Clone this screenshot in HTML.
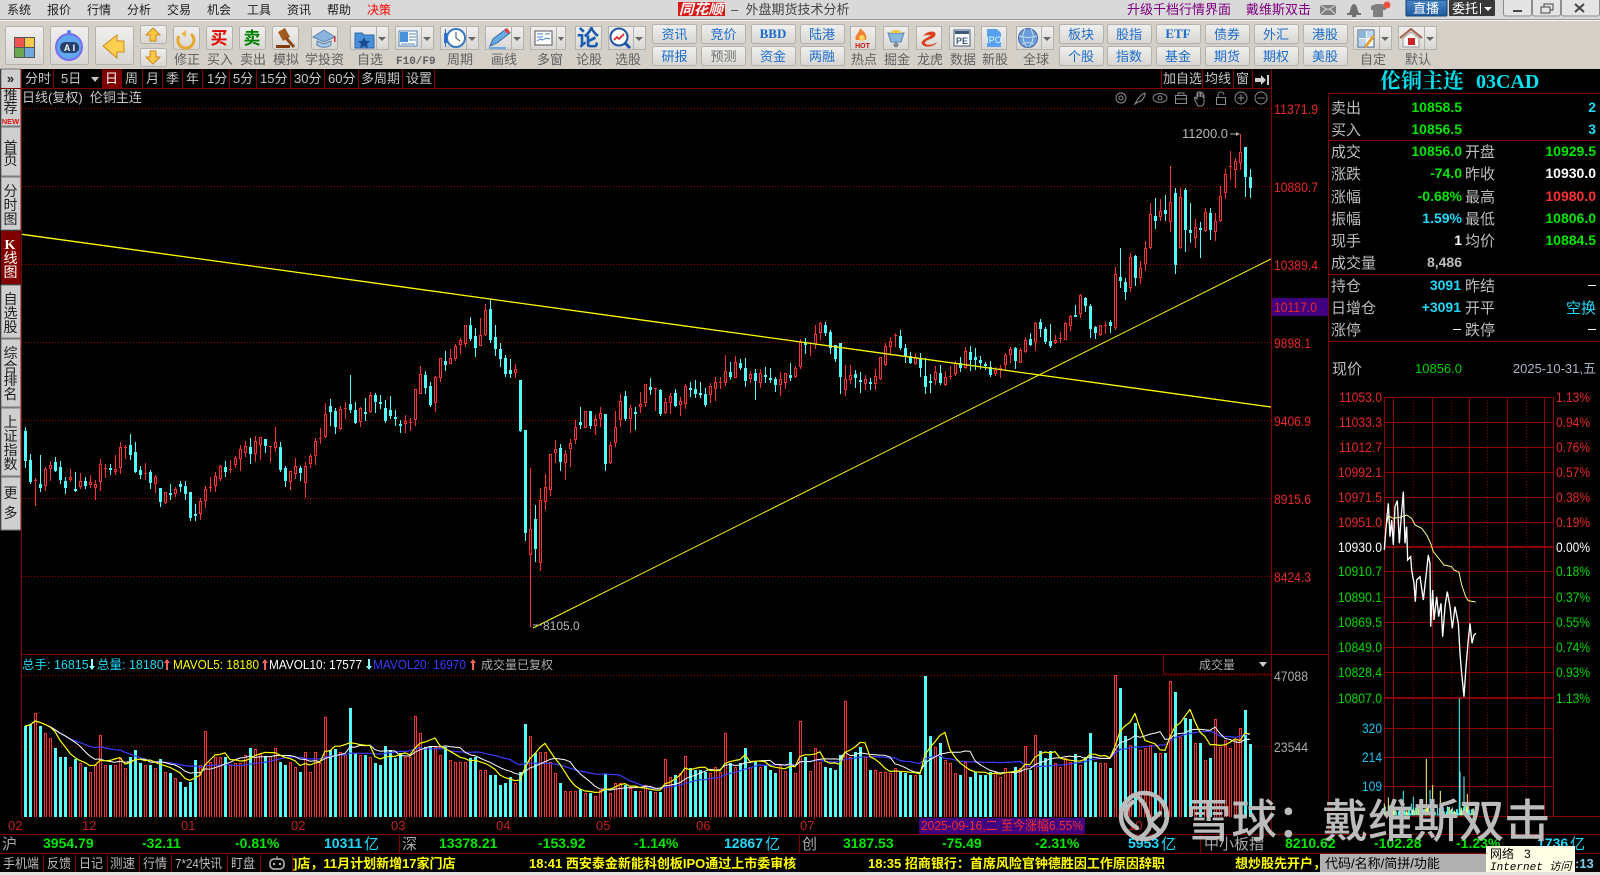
<!DOCTYPE html>
<html lang="zh"><head><meta charset="utf-8"><title>同花顺</title>
<style>
html,body{margin:0;padding:0;background:#000;width:1600px;height:875px;overflow:hidden}
svg{display:block}
text{font-family:"Liberation Sans","WenQuanYi Zen Hei","Noto Sans CJK SC",sans-serif;font-size:12px;white-space:pre}
.r{text-anchor:end}.m{text-anchor:middle}
.b{font-weight:bold}
.n{font-size:14px;font-weight:bold}
.gn{fill:#00e600}.cy{fill:#20d8f8}.wh{fill:#fff}.gy{fill:#bdbdbd}
.lb{font-size:15px;fill:#bdbdbd}
.ax{font-size:14px;fill:#e82828}
.gi{font-size:14px;fill:#00d800}
.xa{font-size:13px;fill:#c02020}
.ig{font-size:14px;fill:#00e600;font-weight:bold}
.tl{fill:#606060;font-size:13px}
.bl{fill:#1c6ccc;font-size:13px}
.tab{fill:#c8c8c8;font-size:13px}
.bot{fill:#bdbdbd;font-size:13px}
.tk{fill:#ff0;font-size:13px;font-weight:bold}
.sd{fill:#222;font-size:14px;text-anchor:middle}
.l{fill:#1c1c1c;font-size:12px}
</style></head><body>
<svg xmlns="http://www.w3.org/2000/svg" width="1600" height="875" viewBox="0 0 1600 875">
<defs>
<linearGradient id="tg" x1="0" y1="0" x2="0" y2="1"><stop offset="0" stop-color="#f0f0ee"/><stop offset="1" stop-color="#d8d6d2"/></linearGradient>
<linearGradient id="bg" x1="0" y1="0" x2="0" y2="1"><stop offset="0" stop-color="#4a86c8"/><stop offset="1" stop-color="#1d5a9e"/></linearGradient>
</defs>
<rect width="1600" height="875" fill="#000"/>
<!-- menu -->
<rect width="1600" height="19" fill="#d9d9d9"/>
<rect y="19" width="1600" height="1" fill="#9a9a9a"/><rect y="20" width="1600" height="1" fill="#f4f4f4"/>
<rect y="21" width="1600" height="48" fill="#d4d0c8"/>
<g class="men">
<text x="7" y="14" class="l">系统</text><text x="47" y="14" class="l">报价</text><text x="87" y="14" class="l">行情</text><text x="127" y="14" class="l">分析</text><text x="167" y="14" class="l">交易</text><text x="207" y="14" class="l">机会</text><text x="247" y="14" class="l">工具</text><text x="287" y="14" class="l">资讯</text><text x="327" y="14" class="l">帮助</text><text x="367" y="14" class="l" style="fill:#f00">决策</text>
</g>
<rect x="678" y="2" width="47" height="14" fill="#d81818"/><text x="701" y="14" class="m b wh" style="font-size:14px;font-style:italic" textLength="44" lengthAdjust="spacingAndGlyphs">同花顺</text>
<text x="731" y="14" style="font-size:13px;fill:#444">–  外盘期货技术分析</text>
<text x="1127" y="14" style="font-size:13px;fill:#800080">升级千档行情界面</text>
<text x="1246" y="14" style="font-size:13px;fill:#800080">戴维斯双击</text>
<!-- title icons -->
<rect x="1320" y="5" width="16" height="10" fill="#808080"/><path d="M1320 5l8 5 8-5M1320 15l6-6M1336 15l-6-6" stroke="#d9d9d9" fill="none"/>
<path d="M1349 13c2-2 1-8 5-9 4 1 3 7 5 9zM1347 13h14v2h-14zM1352 15h4v2h-4z" fill="#707070"/>
<path d="M1371 6l5-2h6l4 2v4l-3 0v7h-10v-7h-2z" fill="#808080"/><circle cx="1387" cy="5" r="3.500" fill="#f05040"/>
<rect x="1406" y="0" width="41" height="16" rx="1" fill="url(#bg)" stroke="#15406e"/><text x="1426" y="13" class="m wh" style="font-size:13px">直播</text>
<rect x="1449" y="0" width="46" height="16" rx="1" fill="#383838"/><text x="1452" y="13" class="wh" style="font-size:13px">委托</text><rect x="1480" y="3" width="1" height="11" fill="#fff"/><path d="M1484 7h8l-4 4z" fill="#fff"/>
<g fill="#e4e4e4" stroke="#8c8c8c"><rect x="1503.500" y="-2" width="28" height="18" rx="2"/><rect x="1532.500" y="-2" width="28" height="18" rx="2"/><rect x="1561.500" y="-2" width="38" height="18" rx="2"/></g>
<rect x="1513" y="10" width="9" height="2" fill="#444"/><path d="M1541 7h9v6h-9zM1544 7v-3h9v6h-3" fill="none" stroke="#444"/><path d="M1575 4l9 8M1584 4l-9 8" stroke="#444" stroke-width="2"/>

<!-- toolbar tiles -->
<g fill="url(#tg)" stroke="#b4b2ae">
<rect x="5.500" y="26.500" width="38" height="38" rx="2"/><rect x="50.500" y="26.500" width="38" height="38" rx="2"/><rect x="95.500" y="26.500" width="38" height="38" rx="2"/>
<rect x="140.500" y="25.500" width="26" height="18" rx="2"/><rect x="140.500" y="48.500" width="26" height="18" rx="2"/>
<rect x="173.500" y="26.500" width="26" height="23" rx="2"/><rect x="206.500" y="26.500" width="26" height="23" rx="2"/><rect x="239.500" y="26.500" width="26" height="23" rx="2"/><rect x="272.500" y="26.500" width="26" height="23" rx="2"/><rect x="311.500" y="26.500" width="26" height="23" rx="2"/>
<rect x="350.500" y="26.500" width="26" height="23"/><rect x="376.500" y="26.500" width="12" height="23"/>
<rect x="395.500" y="26.500" width="26" height="23"/><rect x="421.500" y="26.500" width="12" height="23"/>
<rect x="440.500" y="26.500" width="26" height="23"/><rect x="466.500" y="26.500" width="12" height="23"/>
<rect x="485.500" y="26.500" width="26" height="23"/><rect x="511.500" y="26.500" width="12" height="23"/>
<rect x="530.500" y="26.500" width="26" height="23"/><rect x="556.500" y="26.500" width="9" height="23"/>
<rect x="575.500" y="26.500" width="26" height="23"/>
<rect x="608.500" y="26.500" width="25" height="23"/><rect x="633.500" y="26.500" width="12" height="23"/>
<rect x="850.500" y="26.500" width="25" height="23"/><rect x="883.500" y="26.500" width="25" height="23"/><rect x="916.500" y="26.500" width="25" height="23"/><rect x="949.500" y="26.500" width="25" height="23"/><rect x="981.500" y="26.500" width="25" height="23"/>
<rect x="1016.500" y="26.500" width="25" height="23"/><rect x="1041.500" y="26.500" width="12" height="23"/>
<rect x="1353.500" y="26.500" width="26" height="23"/><rect x="1379.500" y="26.500" width="12" height="23"/>
<rect x="1398.500" y="26.500" width="26" height="23"/><rect x="1424.500" y="26.500" width="12" height="23"/>
<rect x="652.500" y="24.500" width="44" height="19" rx="2"/><rect x="652.500" y="46.500" width="44" height="19" rx="2"/><rect x="701.500" y="24.500" width="44" height="19" rx="2"/><rect x="701.500" y="46.500" width="44" height="19" rx="2"/><rect x="751.500" y="24.500" width="44" height="19" rx="2"/><rect x="751.500" y="46.500" width="44" height="19" rx="2"/><rect x="800.500" y="24.500" width="44" height="19" rx="2"/><rect x="800.500" y="46.500" width="44" height="19" rx="2"/>
<rect x="1059.500" y="24.500" width="44" height="19" rx="2"/><rect x="1059.500" y="46.500" width="44" height="19" rx="2"/><rect x="1107.500" y="24.500" width="44" height="19" rx="2"/><rect x="1107.500" y="46.500" width="44" height="19" rx="2"/><rect x="1156.500" y="24.500" width="44" height="19" rx="2"/><rect x="1156.500" y="46.500" width="44" height="19" rx="2"/><rect x="1205.500" y="24.500" width="44" height="19" rx="2"/><rect x="1205.500" y="46.500" width="44" height="19" rx="2"/><rect x="1254.500" y="24.500" width="44" height="19" rx="2"/><rect x="1254.500" y="46.500" width="44" height="19" rx="2"/><rect x="1303.500" y="24.500" width="44" height="19" rx="2"/><rect x="1303.500" y="46.500" width="44" height="19" rx="2"/>
</g>
<!-- dropdown triangles -->
<g fill="#666"><path d="M378 37h8l-4 4zM423 37h8l-4 4zM468 37h8l-4 4zM513 37h8l-4 4zM558 37h6l-3 4zM635 37h8l-4 4zM1043 37h8l-4 4zM1381 37h8l-4 4zM1426 37h8l-4 4z"/></g>
<!-- icons -->
<rect x="14" y="37" width="21" height="21" fill="#555"/><rect x="15" y="38" width="9" height="9" fill="#ef5350"/><rect x="25" y="38" width="9" height="9" fill="#f4c84a"/><rect x="15" y="48" width="9" height="9" fill="#6aa84f"/><rect x="25" y="48" width="9" height="9" fill="#6fa8dc"/>
<circle cx="69" cy="47" r="13" fill="#5fa8ee" stroke="#7a6cf0" stroke-width="2"/><rect x="60" y="42" width="19" height="11" rx="5" fill="#27406e"/><text x="69.500" y="51" class="m b wh" style="font-size:9px">A I</text><circle cx="69" cy="32" r="2" fill="#5a7fe0"/>
<path d="M103 46l14-11v6h7v11h-7v6z" fill="#ffd050" stroke="#c88a20"/>
<path d="M153 28l7 7h-4v6h-6v-6h-4z" fill="#ffc840" stroke="#c88a20"/><path d="M153 64l7-7h-4v-6h-6v6h-4z" fill="#ffc840" stroke="#c88a20"/>
<path d="M179 36a8 8 0 1 0 12-2" fill="none" stroke="#e8a830" stroke-width="3"/><path d="M186 30v7l-5-3z" fill="#f0b840"/>
<text x="219" y="44" class="m b" style="font-size:17px;fill:#e00000">买</text><text x="252" y="44" class="m b" style="font-size:17px;fill:#008000">卖</text>
<path d="M278 32l7-4 5 9-7 4z" fill="#a05a20"/><path d="M286 38l8 9" stroke="#8a4a18" stroke-width="3"/><rect x="276" y="45" width="14" height="3" fill="#803a10"/>
<path d="M324 30l11 7-11 5-11-5z" fill="#8ab4dc" stroke="#5a84ac"/><path d="M317 41v4c4 3 10 3 14 0v-4l-7 3z" fill="#a8c8e8" stroke="#5a84ac"/><rect x="334" y="36" width="1.500" height="6" fill="#d03030"/>
<path d="M355 33h7l2 2h10v13h-19z" fill="#4a90d9" stroke="#2c6aa8"/><path d="M364 37l2 4h4l-3 3 1 4-4-2-4 2 1-4-3-3h4z" fill="#1c4a90"/>
<rect x="399" y="31" width="18" height="15" fill="#fff" stroke="#5a84ac"/><rect x="400" y="32" width="8" height="10" fill="#4a90d9"/><path d="M409 34h7M409 37h7M409 40h7M401 44h14" stroke="#5a84ac"/>
<circle cx="456" cy="38" r="9" fill="#fff" stroke="#3a78c0" stroke-width="2"/><path d="M456 32v6l4 3" stroke="#444" fill="none"/><rect x="444" y="33" width="3" height="10" fill="#3070d0"/><path d="M445.500 29v18" stroke="#3070d0"/>
<path d="M490 46l3-7 13-10 4 4-13 10z" fill="#6aa8e8" stroke="#3a6ca8"/><path d="M504 30l4 4 2-2-3-4z" fill="#e04040"/><path d="M489 48h17" stroke="#6aa8e8" stroke-width="2"/>
<rect x="535" y="31" width="17" height="14" fill="#fff" stroke="#555"/><path d="M537 34h6M537 37h6M545 34h5M537 41l3-2 3 1 3-2 4 1" stroke="#4a80c0" fill="none"/>
<text x="588" y="46" class="m b" style="font-size:22px;fill:#1a5cb0">论</text>
<circle cx="619" cy="37" r="8.500" fill="#fff" stroke="#1c54a8" stroke-width="2"/><path d="M614 40l3-3 2 2 5-5" stroke="#d82020" fill="none" stroke-width="1.600"/><path d="M625 43l5 5" stroke="#1c54a8" stroke-width="3"/>
<path d="M856 40c-2-5 3-6 4-12 3 3 8 6 6 12z" fill="#f08030"/><circle cx="862" cy="38" r="3" fill="#ffd060"/><text x="862.500" y="48" class="m b" style="font-size:7px;fill:#c81010">HOT</text>
<path d="M888 33h16l-3 9h-10z" fill="#88b8e0" stroke="#5a84ac"/><path d="M890 33c3-4 8-5 12 0z" fill="#f0c848"/><circle cx="896" cy="45" r="2.500" fill="#888"/>
<path d="M923 36c6-7 15-5 12 0-3 4-9 3-10 7 1 3 9 2 12-1-1 4-12 7-15 2-2-4 6-6 9-9-2 0-5 0-8 1z" fill="#d84020"/>
<rect x="954" y="30" width="16" height="16" fill="#fff" stroke="#405878"/><rect x="955" y="31" width="14" height="3" fill="#405878"/><text x="962" y="44" class="m b" style="font-size:9px;fill:#405878">PE</text>
<path d="M987 29h10l4 4v14h-14z" fill="#5aa0f0"/><text x="994" y="43" class="m" style="font-size:9px;fill:#dff">IPO</text>
<circle cx="1028" cy="38" r="9.500" fill="#6a9cd8" stroke="#48689c"/><path d="M1019 36c6 2 12 2 18 0M1022 44c4-2 8-2 12 0M1025 29c-3 6-3 12 2 18M1031 29c3 6 3 12-2 18" stroke="#c0d8f0" fill="none"/>
<rect x="1358" y="30" width="16" height="17" fill="#fff" stroke="#3a5c88"/><rect x="1359" y="31" width="7" height="7" fill="#8ab4dc"/><rect x="1367" y="31" width="6" height="7" fill="#bcd4ec"/><rect x="1359" y="39" width="7" height="7" fill="#bcd4ec"/><path d="M1364 46l9-11 2 2-9 11z" fill="#e0a030"/>
<path d="M1400 38l11-9 11 9" fill="none" stroke="#a06048" stroke-width="2"/><path d="M1403 38l8-6 8 6v9h-16z" fill="#f4f4f4" stroke="#999"/><rect x="1408" y="38" width="7" height="7" fill="#c82828"/>
<!-- tool labels -->
<text x="174" y="64" class="tl">修正</text><text x="207" y="64" class="tl">买入</text><text x="240" y="64" class="tl">卖出</text><text x="273" y="64" class="tl">模拟</text><text x="305" y="64" class="tl">学投资</text><text x="357" y="64" class="tl">自选</text>
<text x="396" y="64" class="tl" style="font-family:'Liberation Mono',monospace;font-size:11px;font-weight:bold">F10/F9</text><text x="447" y="64" class="tl">周期</text><text x="491" y="64" class="tl">画线</text><text x="537" y="64" class="tl">多窗</text><text x="576" y="64" class="tl">论股</text><text x="615" y="64" class="tl">选股</text><text x="851" y="64" class="tl">热点</text><text x="884" y="64" class="tl">掘金</text><text x="917" y="64" class="tl">龙虎</text><text x="950" y="64" class="tl">数据</text><text x="982" y="64" class="tl">新股</text><text x="1023" y="64" class="tl">全球</text><text x="1360" y="64" class="tl">自定</text><text x="1405" y="64" class="tl">默认</text>
<!-- grid buttons -->
<g class="gb">
<text x="674.500" y="39" class="bl m">资讯</text><text x="674.500" y="61" class="bl m">研报</text><text x="723.500" y="39" class="bl m">竞价</text><text x="723.500" y="61" class="m" style="fill:#707070;font-size:13px">预测</text>
<text x="773" y="38" class="bl m b" style="font-family:'Liberation Serif',serif">BBD</text><text x="773" y="61" class="bl m">资金</text><text x="822" y="39" class="bl m">陆港</text><text x="822" y="61" class="bl m">两融</text>
<text x="1081" y="39" class="bl m">板块</text><text x="1081" y="61" class="bl m">个股</text><text x="1129" y="39" class="bl m">股指</text><text x="1129" y="61" class="bl m">指数</text>
<text x="1178" y="38" class="bl m b" style="font-family:'Liberation Serif',serif">ETF</text><text x="1178" y="61" class="bl m">基金</text><text x="1227" y="39" class="bl m">债券</text><text x="1227" y="61" class="bl m">期货</text><text x="1276" y="39" class="bl m">外汇</text><text x="1276" y="61" class="bl m">期权</text><text x="1325" y="39" class="bl m">港股</text><text x="1325" y="61" class="bl m">美股</text>
</g>

<!-- sidebar -->
<g fill="#cfcfcf" stroke="#7a7a7a">
<rect x="1" y="69" width="19.500" height="57"/><rect x="1" y="127" width="19.500" height="49"/><rect x="1" y="177" width="19.500" height="53"/><rect x="1" y="285" width="19.500" height="53"/><rect x="1" y="339" width="19.500" height="68"/><rect x="1" y="408" width="19.500" height="68"/><rect x="1" y="477" width="19.500" height="53"/>
</g>
<rect x="1" y="231" width="19.500" height="53" fill="#800000"/>
<text x="10.500" y="83" class="sd b" style="font-size:13px">»</text>
<text x="10.500" y="100" class="sd">推</text><text x="10.500" y="113" class="sd">荐</text><text x="10.500" y="124" class="m b" style="fill:#e01010;font-size:7.500px">NEW</text>
<text x="10.500" y="152" class="sd">首</text><text x="10.500" y="165" class="sd">页</text>
<text x="10.500" y="196" class="sd">分</text><text x="10.500" y="210" class="sd">时</text><text x="10.500" y="224" class="sd">图</text>
<text x="10" y="249" class="sd b wh" style="fill:#fff;font-family:'Liberation Serif',serif">K</text><text x="10.500" y="263" class="sd" style="fill:#fff">线</text><text x="10.500" y="277" class="sd" style="fill:#fff">图</text>
<text x="10.500" y="304" class="sd">自</text><text x="10.500" y="318" class="sd">选</text><text x="10.500" y="332" class="sd">股</text>
<text x="10.500" y="358" class="sd">综</text><text x="10.500" y="372" class="sd">合</text><text x="10.500" y="385" class="sd">排</text><text x="10.500" y="399" class="sd">名</text>
<text x="10.500" y="427" class="sd">上</text><text x="10.500" y="441" class="sd">证</text><text x="10.500" y="455" class="sd">指</text><text x="10.500" y="469" class="sd">数</text>
<text x="10.500" y="498" class="sd">更</text><text x="10.500" y="518" class="sd">多</text>

<!-- chart frame + grid -->
<g shape-rendering="crispEdges">
<g stroke="#800000" fill="none">
<path d="M21.500 69V817M1271.500 69V834M1328.500 93V834M0 88.500H1272M21 654.500H1328M0 834.500H1600M0 853.500H1600M1328 93.500H1600M1328 140.500H1600M1328 274.500H1600M1328 341.500H1600"/>
<path d="M53.500 69V88M102.500 69V88M121.500 69V88M142.500 69V88M162.500 69V88M182.500 69V88M202.500 69V88M229.500 69V88M256.500 69V88M290.500 69V88M324.500 69V88M358.500 69V88M402.500 69V88M434.500 69V88M1161.500 69V88M1202.500 69V88M1233.500 69V88M1252.500 69V88"/>
<path d="M1163.500 654V674H1271M399.500 835V853M799.500 835V853M1200.500 835V853"/>
<path d="M43.500 854V872M75.500 854V872M107.500 854V872M139.500 854V872M171.500 854V872M227.500 854V872M260.500 854V872M292.500 854V872"/>
<path d="M22.500 817V820M84.500 817V820M195.500 817V820M305.500 817V820M405.500 817V820M510.500 817V820M610.500 817V820M710.500 817V820M814.500 817V820"/>
</g>
<path d="M22 108.500H1271M22 186.500H1271M22 264.500H1271M22 342.500H1271M22 420.500H1271M22 498.500H1271M22 576.500H1271M22 675.500H1271M22 746.500H1271" stroke="#a00000" stroke-dasharray="1 2" fill="none"/>
<rect x="102" y="69.500" width="19" height="18.500" fill="#800000"/>
<rect x="1272" y="298" width="56" height="18" fill="#400080"/>
<!-- intraday grid -->
<g stroke="#8c0000" fill="none">
<path d="M1384 397.500H1553M1384 422.500H1553M1384 447.500H1553M1384 472.500H1553M1384 497.500H1553M1384 522.500H1553M1384 571.500H1553M1384 597.500H1553M1384 622.500H1553M1384 647.500H1553M1384 672.500H1553M1384 728.500H1553M1384 757.500H1553M1384 786.500H1553M1384 816.500H1600"/>
<path d="M1384.500 397V817M1393.500 397V817M1432.500 397V817M1469.500 397V817M1507.500 397V817M1544.500 397V817M1553.500 397V817"/>
<path d="M1413.500 397V817M1451.500 397V817M1487.500 397V817M1526.500 397V817" stroke-dasharray="1 2"/>
<rect x="1384" y="546" width="170" height="2" fill="#8c0000" stroke="none"/><rect x="1384" y="697" width="170" height="2" fill="#8c0000" stroke="none"/>
</g>
<g id="cand"></g>
<g id="vols"></g>
</g>
<g id="ma" fill="none"></g>

<!-- trend lines -->
<path d="M22 234.300L1271 407" stroke="#ffff00" stroke-width="1.300" fill="none"/>
<path d="M533 628L1271 259" stroke="#ffff00" stroke-width="1" fill="none"/>
<!-- tabs -->
<g>
<text x="25" y="83" class="tab">分时</text><text x="61" y="83" class="tab">5日</text><path d="M91 77h8l-4 5z" fill="#c8c8c8"/><text x="105" y="83" class="tab" style="fill:#fff">日</text><text x="125" y="83" class="tab">周</text><text x="146" y="83" class="tab">月</text><text x="166" y="83" class="tab">季</text><text x="186" y="83" class="tab">年</text><text x="207" y="83" class="tab">1分</text><text x="233" y="83" class="tab">5分</text><text x="260" y="83" class="tab">15分</text><text x="294" y="83" class="tab">30分</text><text x="328" y="83" class="tab">60分</text><text x="361" y="83" class="tab">多周期</text><text x="406" y="83" class="tab">设置</text>
<text x="22" y="102" class="tab">日线(复权)  伦铜主连</text>
<text x="1163" y="83" class="tab">加自选</text><text x="1205" y="83" class="tab">均线</text><text x="1236" y="83" class="tab">窗</text><path d="M1255 78h6v-3l5 5-5 5v-3h-6zM1267 75h2v10h-2z" fill="#d0d0d0"/>
</g>
<!-- chart icons -->
<g fill="none" stroke="#8c8c8c" stroke-width="1">
<circle cx="1121" cy="98" r="5"/><circle cx="1121" cy="98" r="2"/>
<path d="M1135 104c3-6 6-10 10-11 0 5-4 9-7 9z"/>
<ellipse cx="1160" cy="98" rx="7" ry="4.500"/><circle cx="1160" cy="98" r="2"/>
<rect x="1175.500" y="95.500" width="11" height="8"/><path d="M1178 95v-2h6v2M1175 99h12"/>
<path d="M1197 104c-2-3-3-6-2-7l2 2v-6h1v4 -5h2v5-5h1v5-4h2v5-3h1v8c0 2-1 2-2 3h-4z"/>
<rect x="1216.500" y="97.500" width="9" height="7"/><path d="M1218 97v-2c0-4 6-4 6 0"/>
<circle cx="1241" cy="98" r="6"/><path d="M1237.500 98h7M1241 94.500v7"/>
<circle cx="1261" cy="98" r="6"/><path d="M1257.500 98h7"/>
</g>
<!-- axis labels -->
<g>
<text x="1274" y="114" class="ax" textLength="44" lengthAdjust="spacingAndGlyphs">11371.9</text><text x="1274" y="192" class="ax" textLength="44" lengthAdjust="spacingAndGlyphs">10880.7</text><text x="1274" y="270" class="ax" textLength="44" lengthAdjust="spacingAndGlyphs">10389.4</text><text x="1274" y="312" class="ax" textLength="43" lengthAdjust="spacingAndGlyphs">10117.0</text><text x="1274" y="348" class="ax" textLength="37" lengthAdjust="spacingAndGlyphs">9898.1</text><text x="1274" y="426" class="ax" textLength="37" lengthAdjust="spacingAndGlyphs">9406.9</text><text x="1274" y="504" class="ax" textLength="37" lengthAdjust="spacingAndGlyphs">8915.6</text><text x="1274" y="582" class="ax" textLength="37" lengthAdjust="spacingAndGlyphs">8424.3</text>
<text x="1274" y="681" style="font-size:14px;fill:#aaa" textLength="34" lengthAdjust="spacingAndGlyphs">47088</text><text x="1274" y="752" style="font-size:14px;fill:#aaa" textLength="34" lengthAdjust="spacingAndGlyphs">23544</text>
<text x="1182" y="138" style="font-size:13px;fill:#b8b8b8">11200.0</text><path d="M1230 134h9" stroke="#aaa"/><path d="M1236 132l4 2-4 2z" fill="#aaa"/>
<text x="543" y="630" style="font-size:12px;fill:#b8b8b8">8105.0</text><path d="M533 625h9" stroke="#aaa"/>
</g>
<!-- right panel -->
<text x="1380" y="88" class="b" style="font-size:21px;fill:#00e0f0;font-family:'Liberation Serif','Noto Serif CJK SC',serif">伦铜主连</text><text x="1476" y="88" class="b" style="font-size:20px;fill:#00e0f0;font-family:'Liberation Serif',serif">03CAD</text>
<g>
<text x="1331" y="113" class="lb">卖出</text><text x="1462" y="112" class="n gn r">10858.5</text><text x="1596" y="112" class="n cy r">2</text>
<text x="1331" y="135" class="lb">买入</text><text x="1462" y="134" class="n gn r">10856.5</text><text x="1596" y="134" class="n cy r">3</text>
<text x="1331" y="157" class="lb">成交</text><text x="1462" y="156" class="n gn r">10856.0</text><text x="1465" y="157" class="lb">开盘</text><text x="1596" y="156" class="n gn r">10929.5</text>
<text x="1331" y="179" class="lb">涨跌</text><text x="1462" y="178" class="n gn r">-74.0</text><text x="1465" y="179" class="lb">昨收</text><text x="1596" y="178" class="n wh r">10930.0</text>
<text x="1331" y="202" class="lb">涨幅</text><text x="1462" y="201" class="n gn r">-0.68%</text><text x="1465" y="202" class="lb">最高</text><text x="1596" y="201" class="n r" style="fill:#ff3232">10980.0</text>
<text x="1331" y="224" class="lb">振幅</text><text x="1462" y="223" class="n cy r">1.59%</text><text x="1465" y="224" class="lb">最低</text><text x="1596" y="223" class="n gn r">10806.0</text>
<text x="1331" y="246" class="lb">现手</text><text x="1462" y="245" class="n wh r">1</text><text x="1465" y="246" class="lb">均价</text><text x="1596" y="245" class="n gn r">10884.5</text>
<text x="1331" y="268" class="lb">成交量</text><text x="1462" y="267" class="n r" style="fill:#bdbdbd">8,486</text>
<text x="1331" y="291" class="lb">持仓</text><text x="1461" y="290" class="n cy r">3091</text><text x="1465" y="291" class="lb">昨结</text><rect x="1588" y="285" width="8" height="1" fill="#fff"/>
<text x="1331" y="313" class="lb">日增仓</text><text x="1461" y="312" class="n cy r">+3091</text><text x="1465" y="313" class="lb">开平</text><text x="1596" y="313" class="r" style="font-size:15px;fill:#20d8f8">空换</text>
<text x="1331" y="335" class="lb">涨停</text><rect x="1453" y="329" width="8" height="1" fill="#fff"/><text x="1465" y="335" class="lb">跌停</text><rect x="1588" y="329" width="8" height="1" fill="#fff"/>
<text x="1332" y="374" class="lb">现价</text><text x="1462" y="373" class="r" style="font-size:13px;fill:#00d000">10856.0</text><text x="1596" y="373" class="r" style="font-size:13px;fill:#a8b4c0">2025-10-31,五</text>
</g>
<!-- intraday labels -->
<g>
<text x="1339" y="402" class="ax" textLength="43" lengthAdjust="spacingAndGlyphs">11053.0</text><text x="1339" y="427" class="ax" textLength="43" lengthAdjust="spacingAndGlyphs">11033.3</text><text x="1339" y="452" class="ax" textLength="43" lengthAdjust="spacingAndGlyphs">11012.7</text><text x="1338" y="477" class="ax" textLength="44" lengthAdjust="spacingAndGlyphs">10992.1</text><text x="1338" y="502" class="ax" textLength="44" lengthAdjust="spacingAndGlyphs">10971.5</text><text x="1338" y="527" class="ax" textLength="44" lengthAdjust="spacingAndGlyphs">10951.0</text><text x="1338" y="552" class="wh" style="font-size:14px" textLength="44" lengthAdjust="spacingAndGlyphs">10930.0</text>
<text x="1338" y="576" class="gi" textLength="44" lengthAdjust="spacingAndGlyphs">10910.7</text><text x="1338" y="602" class="gi" textLength="44" lengthAdjust="spacingAndGlyphs">10890.1</text><text x="1338" y="627" class="gi" textLength="44" lengthAdjust="spacingAndGlyphs">10869.5</text><text x="1338" y="652" class="gi" textLength="44" lengthAdjust="spacingAndGlyphs">10849.0</text><text x="1338" y="677" class="gi" textLength="44" lengthAdjust="spacingAndGlyphs">10828.4</text><text x="1338" y="703" class="gi" textLength="44" lengthAdjust="spacingAndGlyphs">10807.0</text>
<text x="1382" y="733" class="r" style="font-size:14px;fill:#20c0f0" textLength="20" lengthAdjust="spacingAndGlyphs">320</text><text x="1382" y="762" class="r" style="font-size:14px;fill:#20c0f0" textLength="20" lengthAdjust="spacingAndGlyphs">214</text><text x="1382" y="791" class="r" style="font-size:14px;fill:#20c0f0" textLength="20" lengthAdjust="spacingAndGlyphs">109</text>
<text x="1556" y="402" class="ax" textLength="34" lengthAdjust="spacingAndGlyphs">1.13%</text><text x="1556" y="427" class="ax" textLength="34" lengthAdjust="spacingAndGlyphs">0.94%</text><text x="1556" y="452" class="ax" textLength="34" lengthAdjust="spacingAndGlyphs">0.76%</text><text x="1556" y="477" class="ax" textLength="34" lengthAdjust="spacingAndGlyphs">0.57%</text><text x="1556" y="502" class="ax" textLength="34" lengthAdjust="spacingAndGlyphs">0.38%</text><text x="1556" y="527" class="ax" textLength="34" lengthAdjust="spacingAndGlyphs">0.19%</text><text x="1556" y="552" class="wh" style="font-size:14px" textLength="34" lengthAdjust="spacingAndGlyphs">0.00%</text>
<text x="1556" y="576" class="gi" textLength="34" lengthAdjust="spacingAndGlyphs">0.18%</text><text x="1556" y="602" class="gi" textLength="34" lengthAdjust="spacingAndGlyphs">0.37%</text><text x="1556" y="627" class="gi" textLength="34" lengthAdjust="spacingAndGlyphs">0.55%</text><text x="1556" y="652" class="gi" textLength="34" lengthAdjust="spacingAndGlyphs">0.74%</text><text x="1556" y="677" class="gi" textLength="34" lengthAdjust="spacingAndGlyphs">0.93%</text><text x="1556" y="703" class="gi" textLength="34" lengthAdjust="spacingAndGlyphs">1.13%</text>
</g>
<g id="intra" transform="translate(1240 380) scale(.33333)" fill="none"></g>
<!-- volume header -->
<g>
<text x="22" y="669" style="font-size:12.500px;fill:#20d8f8">总手: 16815</text><path d="M91 659h2v7h2l-3 4-3-4h2z" fill="#8ff"/>
<text x="97" y="669" style="font-size:12.500px;fill:#20d8f8">总量: 18180</text><path d="M166 670h2v-7h2l-3-4-3 4h2z" fill="#ff6060"/>
<text x="173" y="669" style="font-size:12.500px;fill:#ffff00" textLength="86" lengthAdjust="spacingAndGlyphs">MAVOL5: 18180</text><path d="M264 670h2v-7h2l-3-4-3 4h2z" fill="#ff6060"/>
<text x="269" y="669" style="font-size:12.500px;fill:#fff" textLength="93" lengthAdjust="spacingAndGlyphs">MAVOL10: 17577</text><path d="M368 659h2v7h2l-3 4-3-4h2z" fill="#8ff"/>
<text x="373" y="669" style="font-size:12.500px;fill:#3c3cff" textLength="93" lengthAdjust="spacingAndGlyphs">MAVOL20: 16970</text><path d="M472 670h2v-7h2l-3-4-3 4h2z" fill="#ff6060"/>
<text x="481" y="669" style="font-size:12px;fill:#aaa">成交量已复权</text>
<text x="1199" y="669" style="font-size:12px;fill:#aaa">成交量</text><path d="M1259 662h8l-4 5z" fill="#ccc"/>
</g>
<!-- x axis -->
<g>
<text x="8" y="830" class="xa">02</text><text x="82" y="830" class="xa">12</text><text x="181" y="830" class="xa">01</text><text x="291" y="830" class="xa">02</text><text x="391" y="830" class="xa">03</text><text x="496" y="830" class="xa">04</text><text x="596" y="830" class="xa">05</text><text x="696" y="830" class="xa">06</text><text x="800" y="830" class="xa">07</text><text x="1128" y="830" class="xa">10</text>
<rect x="919" y="818" width="166" height="16" fill="#400080"/><text x="921" y="830" style="font-size:13px;fill:#f03030" textLength="162" lengthAdjust="spacingAndGlyphs">2025-09-16,二 至今涨幅6.55%</text>
</g>
<!-- index row -->
<g>
<text x="2" y="849" style="font-size:15px;fill:#aaa">沪</text><text x="43" y="848" class="ig">3954.79</text><text x="142" y="848" class="ig">-32.11</text><text x="235" y="848" class="ig">-0.81%</text><text x="324" y="848" class="ig" style="fill:#20d8f8">10311</text><text x="364" y="849" style="font-size:15px;fill:#20d8f8">亿</text>
<text x="402" y="849" style="font-size:15px;fill:#aaa">深</text><text x="439" y="848" class="ig">13378.21</text><text x="538" y="848" class="ig">-153.92</text><text x="634" y="848" class="ig">-1.14%</text><text x="724" y="848" class="ig" style="fill:#20d8f8">12867</text><text x="765" y="849" style="font-size:15px;fill:#20d8f8">亿</text>
<text x="802" y="849" style="font-size:15px;fill:#aaa">创</text><text x="843" y="848" class="ig">3187.53</text><text x="942" y="848" class="ig">-75.49</text><text x="1035" y="848" class="ig">-2.31%</text><text x="1128" y="848" class="ig" style="fill:#20d8f8">5953</text><text x="1161" y="849" style="font-size:15px;fill:#20d8f8">亿</text>
<text x="1204" y="849" style="font-size:15px;fill:#aaa">中小板指</text><text x="1285" y="848" class="ig">8210.62</text><text x="1374" y="848" class="ig">-102.28</text><text x="1456" y="848" class="ig">-1.23%</text><text x="1537" y="848" class="ig" style="fill:#20d8f8">1736</text><text x="1570" y="849" style="font-size:15px;fill:#20d8f8">亿</text>
</g>
<!-- bottom bar -->
<g>
<text x="3" y="868" class="bot" textLength="36" lengthAdjust="spacingAndGlyphs">手机端</text><text x="47" y="868" class="bot" textLength="24" lengthAdjust="spacingAndGlyphs">反馈</text><text x="79" y="868" class="bot" textLength="24" lengthAdjust="spacingAndGlyphs">日记</text><text x="110" y="868" class="bot" textLength="25" lengthAdjust="spacingAndGlyphs">测速</text><text x="143" y="868" class="bot" textLength="24" lengthAdjust="spacingAndGlyphs">行情</text><text x="175" y="868" class="bot" textLength="47" lengthAdjust="spacingAndGlyphs">7*24快讯</text><text x="231" y="868" class="bot" textLength="24" lengthAdjust="spacingAndGlyphs">盯盘</text>
<rect x="270" y="859" width="14" height="10" rx="4" fill="none" stroke="#bdbdbd" stroke-width="1.500"/><path d="M277 856v3" stroke="#bdbdbd"/><rect x="273" y="863" width="2" height="2" fill="#bdbdbd"/><rect x="279" y="863" width="2" height="2" fill="#bdbdbd"/>
<text x="293" y="868" class="tk">]店，11月计划新增17家门店</text>
<text x="529" y="868" class="tk">18:41 西安泰金新能科创板IPO通过上市委审核</text>
<text x="868" y="868" class="tk">18:35 招商银行：首席风险官钟德胜因工作原因辞职</text>
<text x="1235" y="868" class="tk">想炒股先开户，</text>
<rect x="1320" y="854" width="166" height="18" fill="#b0b0b0"/><text x="1325" y="868" style="font-size:13px;fill:#000">代码/名称/简拼/功能</text>
<text x="1575" y="868" style="font-size:13px;font-weight:bold;fill:#7ad0e8">:13</text>
</g>
<rect y="872" width="1600" height="3" fill="#e4e3e0"/>
<!-- watermark -->
<g fill="none" stroke="#bcbcbc" stroke-width="4.500" stroke-linecap="round" stroke-linejoin="round">
<circle cx="1144" cy="816" r="23"/>
<path d="M1135 795c4 3 8 6 10 11 2 5 4 10 5 16 1 6-4 13-13 17"/>
<path d="M1160 813l-10 9 10 10"/>
<path d="M1133 802c-5 3-7 8-7 12 0 5 5 10 11 14"/>
</g>
<text x="1186" y="837" style="font-family:'Noto Sans CJK SC',sans-serif;font-size:45.500px;font-weight:500;fill:#bcbcbc">雪球<tspan style="font-family:'Noto Sans CJK TC',sans-serif">：</tspan>戴维斯双击</text>
<!-- tooltip -->
<rect x="1486" y="846" width="89" height="26" fill="#ffffe6"/>
<text x="1490" y="858" style="font-size:12px;fill:#000">网络   3</text>
<text x="1490" y="870" style="font-size:11px;fill:#000;font-style:italic;font-family:'Liberation Mono','Noto Sans CJK SC',monospace">Internet 访问</text>
</svg>
<script>
var C="c,427,431,461,467 c,454,460,482,483 r,478,480,481,505 c,455,484,488,491 r,467,469,485,490 r,461,465,468,480 c,457,462,471,471 c,461,467,480,483 c,477,481,488,493 r,469,477,479,481 c,472,489,490,491 r,473,481,486,488 c,477,481,486,488 r,475,482,484,487 r,480,484,487,499 r,459,464,481,490 r,464,468,469,477 c,464,468,469,474 r,455,469,471,474 r,442,447,467,473 r,445,447,448,458 c,434,445,455,459 c,442,452,472,472 c,466,470,475,478 r,463,473,474,479 c,470,472,483,488 r,475,477,483,492 c,488,488,502,506 r,492,492,502,503 c,484,493,494,499 r,487,489,493,496 c,481,484,487,491 c,481,486,494,499 c,492,492,518,520 c,504,514,515,520 r,498,501,513,519 r,486,489,500,507 r,477,487,488,491 r,472,476,485,491 r,465,466,478,480 c,461,467,472,476 r,460,469,470,472 r,456,458,464,467 r,445,449,458,470 r,441,446,452,456 c,438,447,454,463 r,436,441,453,461 r,437,437,444,459 c,439,439,446,452 r,446,446,447,461 r,427,442,447,451 c,442,447,470,471 c,466,468,481,486 r,471,471,481,489 r,458,466,473,478 c,466,468,473,480 r,462,466,482,497 r,454,456,463,467 r,438,441,455,464 r,428,438,439,443 r,403,414,436,437 c,399,406,412,425 c,408,411,427,433 r,406,409,428,429 r,402,408,409,418 c,375,404,410,412 c,402,410,423,423 r,407,408,421,426 c,398,412,413,420 r,392,395,411,412 c,393,395,402,412 c,395,402,403,408 c,400,408,421,422 c,396,410,416,418 c,410,417,418,425 c,420,424,426,432 r,415,421,423,432 r,418,422,423,430 r,389,389,419,425 r,366,374,393,393 "+
"c,371,375,388,393 c,382,386,405,406 r,376,377,402,411 r,358,358,377,381 c,351,361,365,370 r,349,358,363,363 r,344,346,358,360 r,338,340,344,353 r,325,325,343,346 c,317,325,339,340 c,328,336,348,356 r,318,335,345,345 r,304,310,334,335 c,299,309,340,342 c,325,337,349,355 c,343,349,359,366 c,355,358,374,376 c,359,370,374,377 r,364,369,372,377 c,380,380,431,431 c,430,430,533,540 r,468,529,554,626 c,505,519,549,561 r,488,500,562,570 r,474,487,501,509 r,454,454,489,495 r,440,449,452,462 c,444,448,462,470 r,450,454,462,479 r,439,443,448,466 r,420,427,439,443 c,407,422,425,428 r,411,411,427,427 c,411,411,426,428 r,415,419,425,434 r,407,413,418,426 c,414,414,464,470 r,442,445,462,463 r,411,427,442,446 r,394,401,419,426 c,391,396,419,420 r,405,408,418,432 c,407,412,414,429 r,392,404,406,412 r,384,384,402,406 c,378,387,390,394 r,388,388,389,410 c,389,390,414,415 r,398,402,412,413 r,393,396,402,413 c,389,393,406,406 r,397,401,404,415 r,384,386,403,408 c,382,388,389,396 c,380,389,394,397 c,382,393,394,397 c,388,394,405,406 r,383,386,394,402 r,377,382,388,400 r,377,382,383,388 r,355,371,382,385 "+
"c,362,372,377,379 r,356,362,377,377 c,359,363,368,369 c,358,368,381,386 r,371,374,378,382 c,369,373,381,399 r,369,373,382,387 c,367,375,377,382 c,368,378,379,382 c,377,379,385,391 r,372,379,384,395 r,373,373,382,388 c,363,375,378,380 r,366,368,376,377 r,339,342,366,368 c,338,343,344,353 r,342,343,344,355 r,325,334,343,348 r,322,323,332,339 c,322,325,333,335 c,330,332,348,353 c,345,345,359,361 c,343,343,377,393 "+
"r,365,379,389,395 r,365,375,379,383 c,370,374,378,387 c,372,380,381,392 r,375,379,383,389 c,378,382,383,389 r,369,376,383,389 r,357,357,378,379 r,343,346,364,365 r,337,341,346,355 r,333,335,336,346 c,330,336,348,349 c,344,348,357,362 c,352,356,363,363 r,353,357,363,364 c,353,358,368,376 c,358,376,387,393 c,374,381,383,392 r,366,372,379,384 c,365,373,383,384 r,371,377,384,385 r,366,376,377,378 r,361,363,373,375 c,357,363,368,371 r,347,351,367,368 c,346,352,360,370 c,348,357,360,369 c,356,360,363,368 c,362,364,365,369 c,361,367,375,376 r,367,370,373,375 r,365,368,369,377 r,353,355,364,370 r,347,349,354,362 c,347,348,361,368 r,348,350,362,362 r,337,340,351,352 c,333,339,345,345 r,322,323,341,350 c,319,322,329,336 c,327,329,342,343 c,324,341,346,347 r,335,340,342,343 r,332,338,339,342 r,322,323,339,339 r,315,316,325,330 c,305,315,316,316 r,294,295,313,317 c,297,298,306,311 c,304,306,329,337 c,326,327,333,338 r,325,325,334,335 r,322,325,326,333 c,320,322,326,332 r,267,274,327,329 c,248,277,281,287 c,278,282,292,299 r,253,257,287,291 c,255,256,278,285 r,261,268,277,283 r,241,248,263,270 r,203,214,247,248 c,198,216,221,228 r,199,211,216,220 c,195,210,214,220 r,166,202,221,231 c,188,193,265,273 r,188,197,247,248 c,188,190,230,251 c,203,230,233,242 r,219,227,237,247 c,222,228,229,257 r,208,212,230,231 c,208,213,230,239 r,213,221,231,240 r,186,196,220,221 r,169,174,192,198 r,151,166,167,179 r,158,161,169,187 r,134,152,162,169 c,147,147,177,196 c,169,177,188,197";
var cd=C.split(" ").map(function(s){var a=s.split(",");return [a[0],+a[1],+a[2],+a[3],+a[4]]});
var V=[726,724,713,726,733,738,748,757,757,767,759,763,767,772,765,735,765,765,765,758,768,757,750,763,765,765,768,759,772,773,778,782,787,782,760,765,731,762,757,757,757,765,763,763,755,748,749,754,756,756,748,762,765,762,767,772,752,772,752,763,717,750,749,752,755,708,753,755,755,757,763,765,746,750,758,753,757,757,716,733,747,747,747,755,747,760,762,762,762,758,757,770,770,775,775,785,783,777,783,772,724,736,753,752,752,762,773,783,791,791,791,789,793,793,796,790,774,793,783,783,785,788,791,791,785,791,792,792,759,777,775,773,756,768,770,770,772,773,767,772,733,763,767,763,748,767,761,767,765,770,773,765,771,752,773,721,757,771,748,762,767,768,770,755,701,757,752,747,757,770,770,772,772,773,768,772,773,775,775,775,676,736,747,743,760,763,773,775,762,777,772,775,775,772,772,777,768,772,767,768,746,770,735,751,758,751,763,767,758,762,754,765,757,733,762,763,763,768,675,688,736,745,723,750,748,745,753,753,753,681,692,737,718,719,743,743,760,758,719,747,740,748,740,728,710,744];
var RED="#ff3232",CY="#54fcfc",NS="http://www.w3.org/2000/svg";
function P(p,d,at){var e=document.createElementNS(NS,"path");e.setAttribute("d",d);for(var k in at)e.setAttribute(k,at[k]);p.appendChild(e)}
var gc=document.getElementById("cand"),cyd="",redd="";
cd.forEach(function(k,i){var x=25+5*i,h=k[1],t=k[2],b=k[3],l=k[4];
 if(k[0]=="c"){cyd+="M"+x+" "+h+"h1V"+(l+1)+"h-1z";if(b<=t+1){cyd+="M"+(x-1)+" "+t+"h3v2h-3z"}else{cyd+="M"+(x-1)+" "+t+"h3V"+b+"h-3z"}}
 else{if(t>h)redd+="M"+x+" "+h+"h1V"+t+"h-1z";if(l>b)redd+="M"+x+" "+b+"h1V"+(l+1)+"h-1z";
  if(b<=t+1){redd+="M"+(x-1)+" "+t+"h3v1h-3z"}else{redd+="M"+(x-1)+" "+t+"h3v1h-3zM"+(x-1)+" "+b+"h3v1h-3zM"+(x-1)+" "+t+"h1V"+(b+1)+"h-1zM"+(x+1)+" "+t+"h1V"+(b+1)+"h-1z"}}
});
P(gc,cyd,{fill:CY});P(gc,redd,{fill:RED});
var gv=document.getElementById("vols"),vc="",vr="",base=817;
V.forEach(function(t,i){var x=25+5*i,c=cd[i]?cd[i][0]:"c";
 if(c=="c"){vc+="M"+(x-1)+" "+t+"h3V"+base+"h-3z"}else{vr+="M"+(x-1)+" "+t+"h3v1h-3zM"+(x-1)+" "+t+"h1V"+base+"h-1zM"+(x+1)+" "+t+"h1V"+base+"h-1z"}
});
P(gv,vc,{fill:CY});P(gv,vr,{fill:RED});
function ma(n,col,w){var d="";for(var i=0;i<V.length;i++){var s=0,c=0;for(var j=Math.max(0,i-n+1);j<=i;j++){s+=V[j];c++}
 var y=(s/c).toFixed(1);d+=(i?"L":"M")+(25+5*i)+" "+y}
 P(document.getElementById("ma"),d,{stroke:col,"stroke-width":w,"stroke-linejoin":"round"})}
ma(20,"#3c3cff",1.2);ma(10,"#ffffff",1);ma(5,"#ffff00",1.2);
var gi=document.getElementById("intra");
var w=[433,510,440,420,445,370,450,470,455,420,460,495,465,380,472,362,478,490,483,420,490,335,495,490,500,440,503,540,512,530,515,570,522,610,526,665,530,600,540,590,550,660,565,525,570,550,572,740,578,630,582,720,590,650,596,710,603,670,608,770,615,680,622,635,630,680,637,745,645,680,655,730,660,820,665,880,672,950,678,860,684,790,690,730,696,790,702,765,708,760];
var y=[433,505,438,440,445,408,460,415,480,412,500,405,515,415,525,435,545,445,560,465,572,490,580,515,600,540,612,555,635,560,642,570,657,577,665,615,677,650,685,662,707,666];
function PL(a){var d="";for(var i=0;i<a.length;i+=2)d+=(i?"L":"M")+a[i]+" "+a[i+1];return d}
P(gi,PL(y),{stroke:"#ffff80","stroke-width":3});P(gi,PL(w),{stroke:"#fff","stroke-width":4});
var spk=[[658,955,"#54fcfc"],[660,1175,"#54fcfc"],[672,1190,"#54fcfc"],[559,1137,"#ffff80"],[490,1233,"#54fcfc"],[578,1215,"#ffff80"],[570,1230,"#54fcfc"],[601,1233,"#ffff80"],[445,1252,"#ffff80"],[682,1242,"#ffff80"],[520,1250,"#54fcfc"]];
var d1="",d2="",seed=7;
for(var zx=433;zx<712;zx+=3){seed=(seed*31+11)%97;var tp=1305-(seed%35);if(seed%2)d1+="M"+zx+" "+tp+"V1306";else d2+="M"+zx+" "+tp+"V1306"}
P(gi,d1,{stroke:"#54fcfc","stroke-width":3});P(gi,d2,{stroke:"#ffff80","stroke-width":3});
spk.forEach(function(s){P(gi,"M"+s[0]+" "+s[1]+"V1306",{stroke:s[2],"stroke-width":3})});
</script>
</body></html>
